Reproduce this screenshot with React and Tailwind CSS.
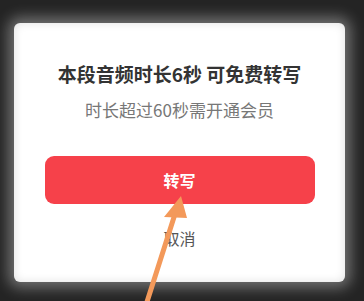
import React from 'react';

const font = { fontFamily: '"Noto Sans CJK SC", "Noto Sans", sans-serif' };

function Arrow() {
    return (
        <svg className="absolute left-0 top-0 pointer-events-none" width="364" height="301" viewBox="0 0 364 301">
            <line x1="146" y1="305" x2="175" y2="214" stroke="#f3995a" strokeWidth="5" strokeLinecap="round" />
            <polygon points="181,196 164,217 187,218" fill="#f3995a" />
        </svg>
    );
}

export default function App() {
    return (
        <div className="relative w-[364px] h-[301px] overflow-hidden bg-[#242424] pt-[23px] px-[14px]" style={font}>
            <div className="w-[331px] h-[259px] bg-white rounded-[6px] shadow-[0_0_14px_6px_rgba(255,255,255,0.35),inset_0_0_10px_rgba(0,0,0,0.12)] flex flex-col items-center pt-[38px]">
                <div className="text-[19px] leading-[26px] font-bold text-[#333]">
                    本段音频时长6秒 可免费转写
                </div>
                <div className="mt-[11px] text-[17px] leading-[24px] text-[#777]">
                    时长超过60秒需开通会员
                </div>
                <button className="mt-[34px] w-[270px] h-[48px] rounded-[9px] bg-[#f6414a] text-white text-[16px] font-bold">
                    转写
                </button>
                <div className="mt-[23px] text-[16px] leading-[22px] text-[#555]">取消</div>
            </div>
            <Arrow />
        </div>
    );
}
